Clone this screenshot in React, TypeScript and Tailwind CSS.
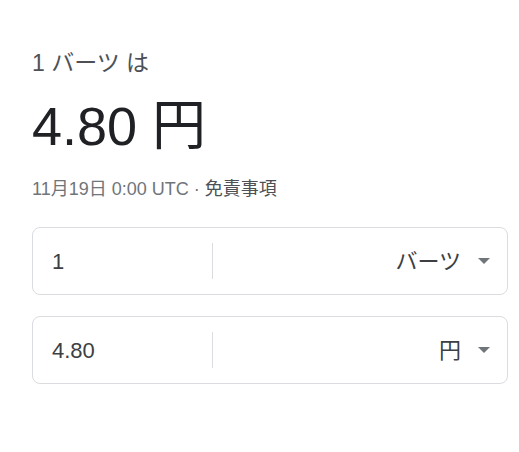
const rows = [
  { amount: "1", unit: "バーツ" },
  { amount: "4.80", unit: "円" },
];

const font = { fontFamily: '"Liberation Sans", "Noto Sans CJK JP", sans-serif' };

const CurrencyRow = ({ amount, unit }: { amount: string; unit: string }) => (
  <div className="flex h-[68px] items-center rounded-lg border border-[#dadce0] bg-white">
    <div className="w-[179px] shrink-0 pl-[19px] text-[22px] text-[#3c4043]">{amount}</div>
    <div className="h-9 w-px bg-[#dadce0]" />
    <div className="flex flex-1 items-center justify-end pr-[17px] text-[22px] text-[#3c4043]">
      <span>{unit}</span>
      <span className="ml-[17px] h-0 w-0 border-x-[6.5px] border-t-[6px] border-x-transparent border-t-[#70757a]" />
    </div>
  </div>
);

export default function App() {
  return (
    <div className="min-h-[452px] w-[519px] bg-white pl-8 pr-[11px] pt-[52px]" style={font}>
      <div className="text-[23px] leading-none text-[#4d5156]">1 バーツ は</div>
      <div className="mt-[24px] text-[54px] leading-none text-[#202124]">4.80 円</div>
      <div className="mt-[27px] text-[18px] leading-none text-[#70757a]">
        11月19日 0:00 UTC · <span className="text-[#4d5156]">免責事項</span>
      </div>
      <div className="mt-[29px] flex flex-col gap-[21px]">
        {rows.map((r) => (
          <CurrencyRow key={r.unit} amount={r.amount} unit={r.unit} />
        ))}
      </div>
    </div>
  );
}
